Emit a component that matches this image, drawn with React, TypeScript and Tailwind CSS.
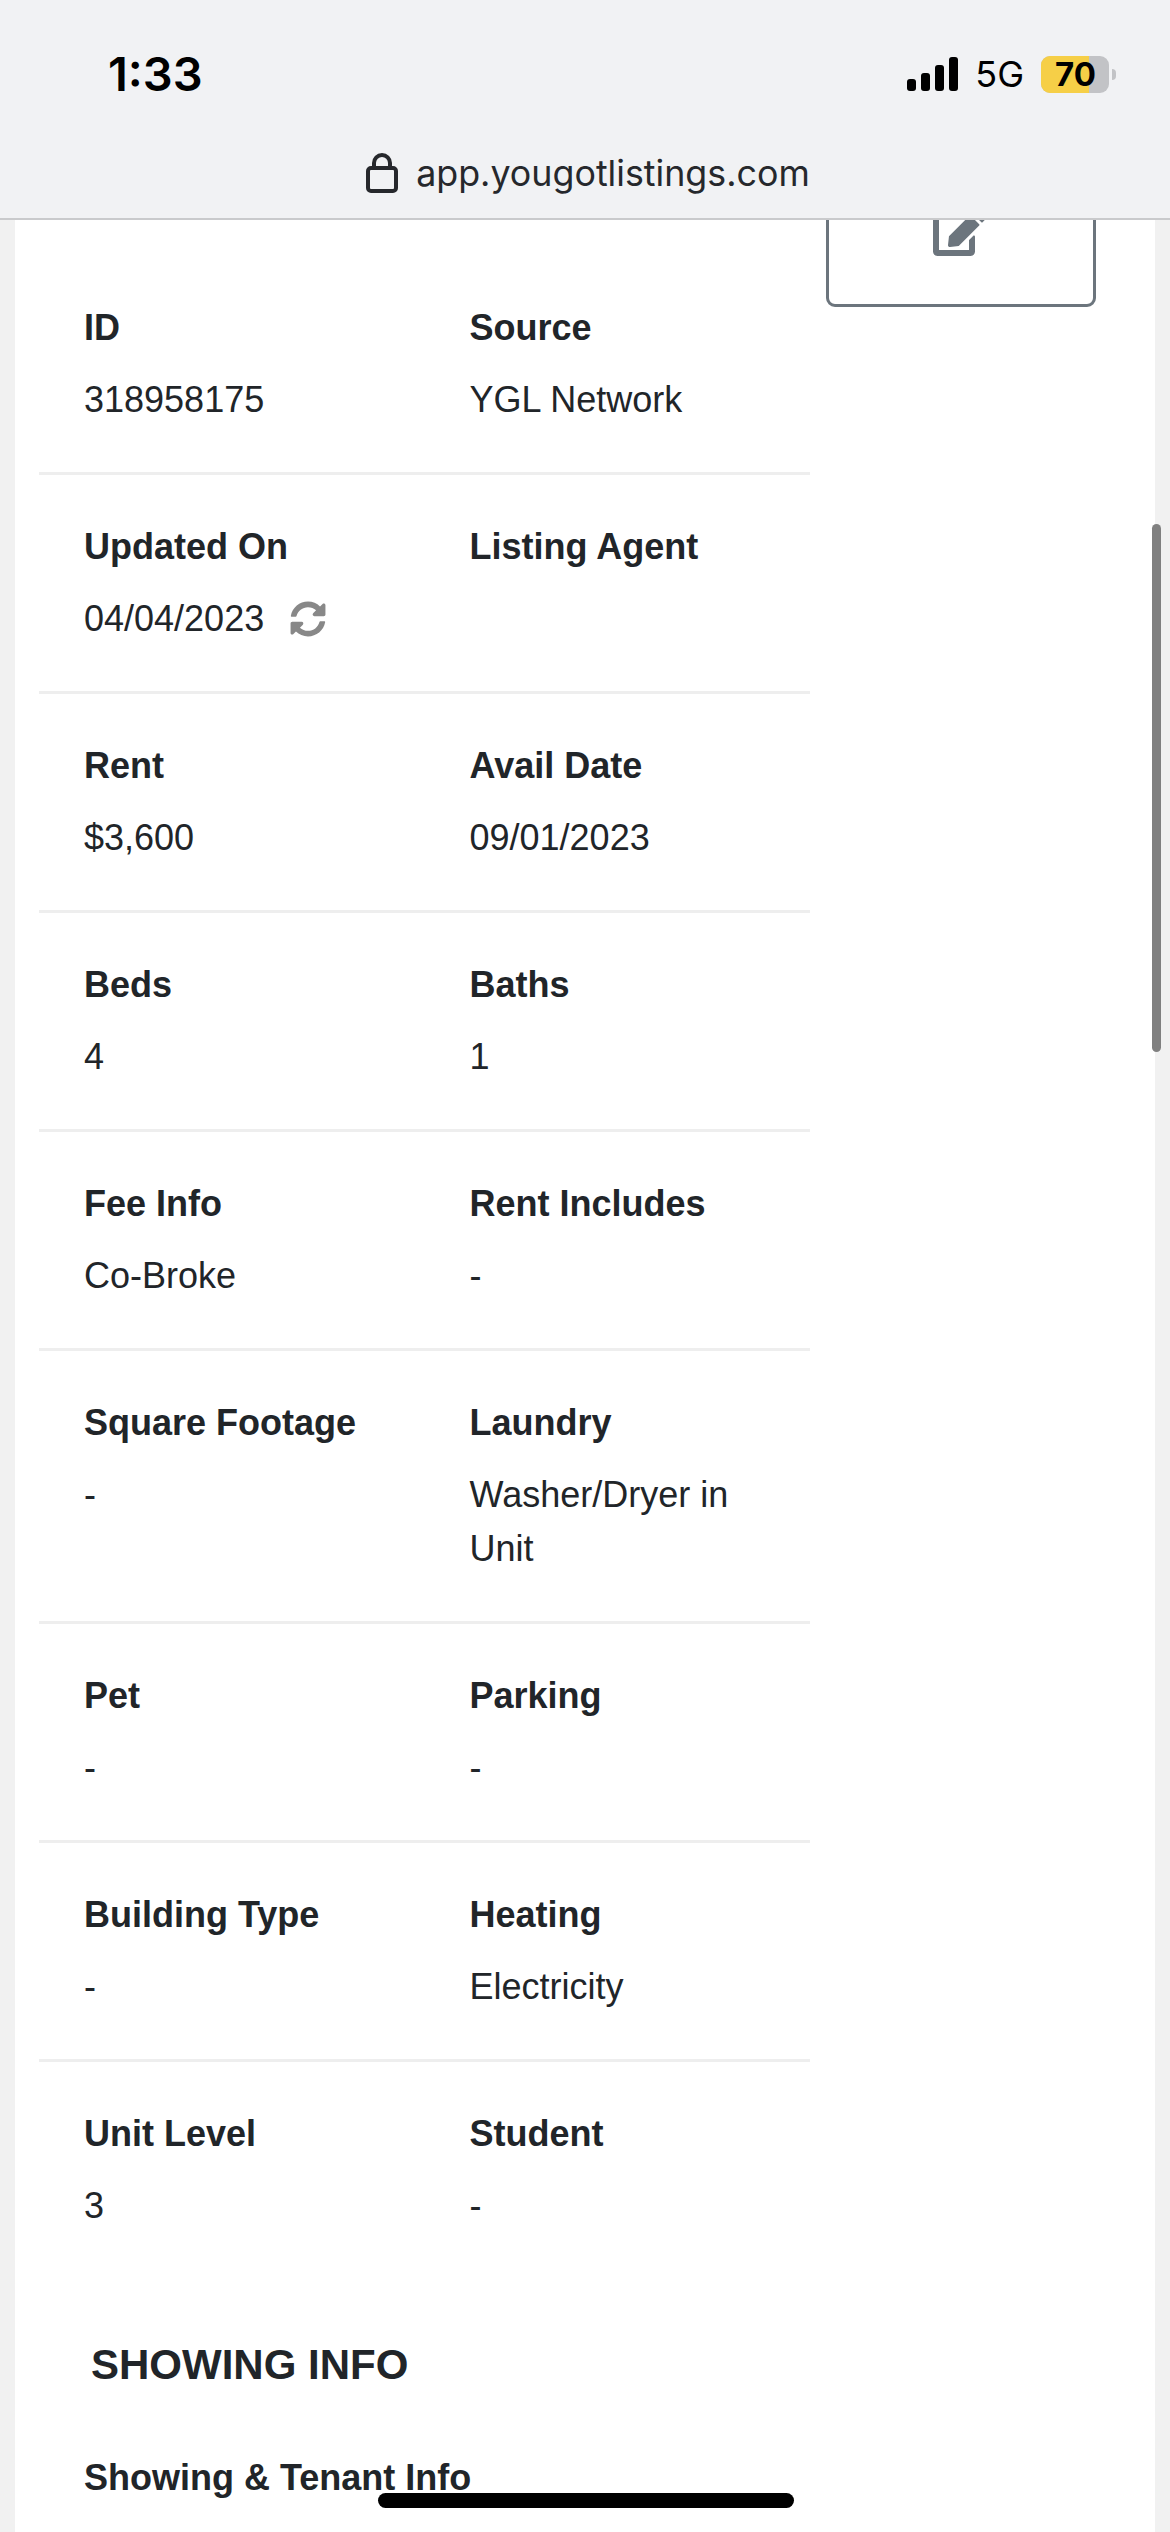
import React from "react";
import { FaEdit, FaSyncAlt } from "react-icons/fa";

const rows = [
  [{ label: "ID", value: "318958175" }, { label: "Source", value: "YGL Network" }],
  [{ label: "Updated On", value: "04/04/2023", sync: true }, { label: "Listing Agent", value: "" }],
  [{ label: "Rent", value: "$3,600" }, { label: "Avail Date", value: "09/01/2023" }],
  [{ label: "Beds", value: "4" }, { label: "Baths", value: "1" }],
  [{ label: "Fee Info", value: "Co-Broke" }, { label: "Rent Includes", value: "-" }],
  [{ label: "Square Footage", value: "-" }, { label: "Laundry", value: "Washer/Dryer in Unit" }],
  [{ label: "Pet", value: "-" }, { label: "Parking", value: "-" }],
  [{ label: "Building Type", value: "-" }, { label: "Heating", value: "Electricity" }],
  [{ label: "Unit Level", value: "3" }, { label: "Student", value: "-" }],
];

function StatusBar() {
  return (
    <header className="relative z-10 h-[220px] shrink-0 border-b-2 border-[#c9cacc] bg-[#f1f2f4] font-['Inter',sans-serif] text-black">
      <div className="flex items-center justify-between pl-[108px] pr-[54px] pt-[48px]">
        <span className="text-[47px] font-semibold leading-[52px]">1:33</span>
        <div className="flex items-center">
          <div className="flex h-[34px] items-end gap-[5px]">
            <div className="h-[12px] w-[9px] rounded-[3px] bg-black" />
            <div className="h-[18px] w-[9px] rounded-[3px] bg-black" />
            <div className="h-[26px] w-[9px] rounded-[3px] bg-black" />
            <div className="h-[34px] w-[9px] rounded-[3px] bg-black" />
          </div>
          <span className="ml-[17px] text-[36px] leading-[40px]">5G</span>
          <div className="relative ml-[17px] flex h-[37px] w-[68px] rounded-[9px] bg-[#c2c3c6]">
            <div className="h-full w-[48px] rounded-l-[9px] bg-[#f6cf47]" />
            <span className="absolute left-[14px] top-0 text-[33px] font-bold leading-[37px]">70</span>
          </div>
          <div className="ml-[3px] h-[11px] w-[4px] rounded-r-full bg-[#c2c3c6]" />
        </div>
      </div>
      <div className="mt-[51px] flex items-center justify-center pl-[6px]">
        <svg width="32" height="40" viewBox="0 0 32 40" fill="none" stroke="#26282c" strokeWidth="4">
          <rect x="2" y="15" width="28" height="23" rx="3" />
          <path d="M8 15V10a8 8 0 0 1 16 0v5" />
        </svg>
        <span className="ml-[18px] text-[35.8px] leading-[44px] text-[#26282c]">app.yougotlistings.com</span>
      </div>
    </header>
  );
}

export default function App() {
  return (
    <div className="relative flex h-[2532px] w-[1170px] flex-col overflow-hidden bg-[#f1f1f1] font-['Liberation_Sans',sans-serif] text-[36px] leading-[54px] text-[#212529]">
      <StatusBar />
      <main className="mx-[15px] flex flex-1 bg-white pl-[24px]">
        <div className="w-[771px] shrink-0 pt-[36px]">
          {rows.map((row, i) => (
            <div
              key={i}
              className={
                i < rows.length - 1
                  ? "grid grid-cols-2 border-b-[3px] border-[#eeeeee] py-[45px]"
                  : "grid grid-cols-2 pt-[45px]"
              }
            >
              {row.map((cell) => (
                <div key={cell.label} className="px-[45px]">
                  <div className="mb-[18px] font-bold">{cell.label}</div>
                  <div className="flex h-auto min-h-[54px] items-center">
                    <span>{cell.value}</span>
                    {"sync" in cell && <FaSyncAlt className="ml-[26px] text-[36px] text-[#888888]" />}
                  </div>
                </div>
              ))}
            </div>
          ))}
          <h5 className="mt-[105px] pl-[52px] text-[42px] font-bold leading-[54px]">SHOWING INFO</h5>
          <div className="mt-[59px] px-[45px] font-bold">Showing &amp; Tenant Info</div>
        </div>
        <div className="ml-[16px] w-[270px] shrink-0">
          <button className="-mt-[61px] flex h-[148px] w-full items-center justify-center rounded-[9px] border-[3px] border-[#6c757d] text-[#6c757d]">
            <FaEdit className="mr-[3px] mb-[2px] text-[54px]" />
          </button>
        </div>
      </main>
      <div className="absolute left-[1152px] top-[524px] h-[528px] w-[9px] rounded-full bg-[#808080]" />
      <div className="absolute left-[378px] top-[2493px] h-[15px] w-[416px] rounded-full bg-black" />
    </div>
  );
}
